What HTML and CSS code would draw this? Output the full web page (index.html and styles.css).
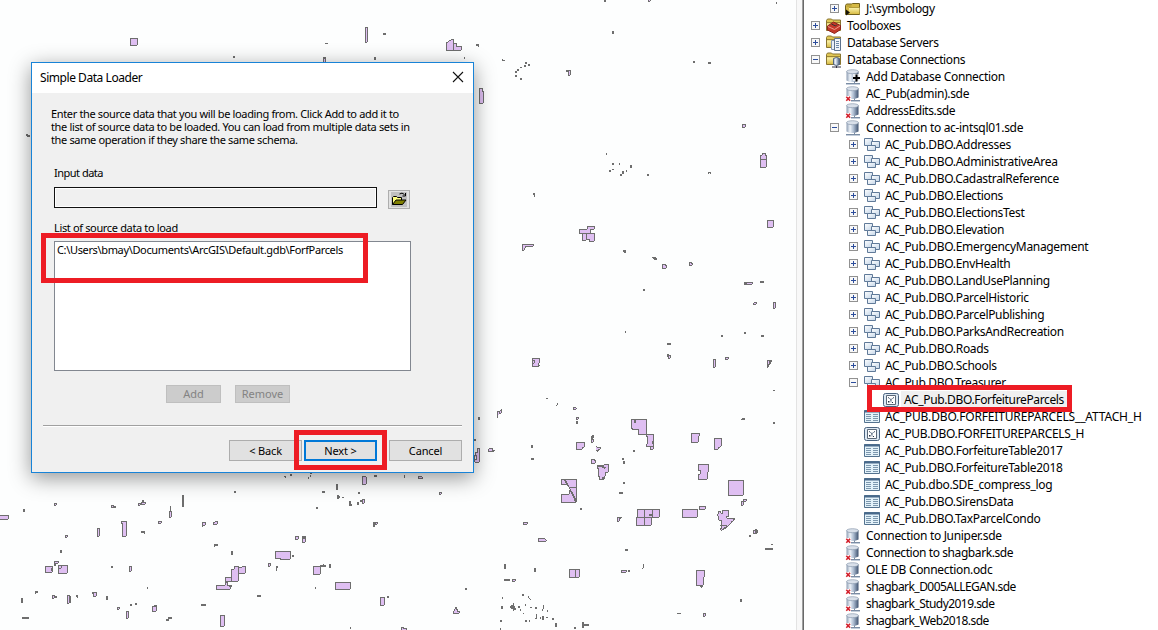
FILE: index.html
```html
<!DOCTYPE html>
<html lang="en">
<head>
<meta charset="utf-8">
<title>Simple Data Loader</title>
<link rel="stylesheet" href="styles.css">
</head>
<body>
<svg class="defs" aria-hidden="true">
  <defs>
    <linearGradient id="steel" x1="0" x2="1" y1="0" y2="0"><stop offset="0" stop-color="#8d9db3"/><stop offset=".3" stop-color="#eef3f9"/><stop offset=".6" stop-color="#a9b9ce"/><stop offset="1" stop-color="#3f526f"/></linearGradient>
    <linearGradient id="gold" x1="0" x2="0" y1="0" y2="1"><stop offset="0" stop-color="#fbf4b0"/><stop offset="1" stop-color="#d9bd45"/></linearGradient>
    <linearGradient id="sky" x1="0" x2="1" y1="0" y2="1"><stop offset="0" stop-color="#fff"/><stop offset="1" stop-color="#c3d5e8"/></linearGradient>
    <symbol id="plus" viewBox="0 0 9 9"><rect x=".5" y=".5" width="8" height="8" fill="#f8f8f8" stroke="#919191"/><path d="M2 4.500h5M4.500 2v5" stroke="#2c4d9c"/></symbol>
    <symbol id="minus" viewBox="0 0 9 9"><rect x=".5" y=".5" width="8" height="8" fill="#f8f8f8" stroke="#919191"/><path d="M2 4.500h5" stroke="#2c4d9c"/></symbol>
    <symbol id="folder" viewBox="0 0 16 16"><path d="M.5 13.500V4.500l1-1.500h5l1-.5h7v11z" fill="#d5b945" stroke="#71601d"/><path d="M4 13V6.500h10.500V13z" fill="url(#gold)"/><path d="M4 6.500h10.500M1.500 5h5" stroke="#a58d2c" stroke-width=".8"/><path d="M1 8.500l4 3-4 3z" fill="#17150b"/></symbol>
    <symbol id="cfolder" viewBox="0 0 16 16"><path d="M.5 12.500V2.500l1-1.500h4l1 1h8v10.500z" fill="#dfc654" stroke="#897530"/><path d="M1 5.500h13v6.500H1z" fill="url(#gold)"/><path d="M1 4.500h13" stroke="#9c8533"/></symbol>
    <symbol id="toolbox" viewBox="0 0 16 16"><use href="#cfolder" width="16" height="16"/><path d="M1.500 8l6-4 7 3.500v4l-6 4-7-3.500z" fill="#c4392a" stroke="#8e261c"/><path d="M2 8.500l6.500 3 5.500-3.500" stroke="#ef9d8b" fill="none"/><path d="M5.500 6l4 2 1.500-1.500" stroke="#333" fill="none"/></symbol>
    <symbol id="servers" viewBox="0 0 16 16"><use href="#cfolder" width="16" height="16"/><path d="M5.500 5.500h3v9h-3z" fill="#e8eef5" stroke="#8195ad"/><path d="M8.500 3.500h6v12h-6z" fill="#f0f5fa" stroke="#5d738e"/><path d="M10 6.500h3M10 8.500h3M10 10.500h3M10 12.500h3" stroke="#6b88a8"/></symbol>
    <symbol id="conns" viewBox="0 0 16 16"><use href="#cfolder" width="16" height="16"/><path d="M7.500 6.500q3-2 6 0v6q-3 2-6 0z" fill="url(#steel)" stroke="#53657e"/><path d="M10.500 14v2M6 15h9" stroke="#334"/></symbol>
    <symbol id="db" viewBox="0 0 16 16"><path d="M1.500 2.500v9q5.500 3 12 0v-9z" fill="url(#steel)"/><ellipse cx="7.500" cy="2.700" rx="6" ry="2" fill="#d9e0ea" stroke="#8999ad" stroke-width=".7"/><path d="M9.500 12.500v2M1 14.500h14" stroke="#7b8da4"/><path d="M1 15.500h14" stroke="#c4cedb"/></symbol>
    <symbol id="dbx" viewBox="0 0 16 16"><use href="#db" width="16" height="16"/><path d="M0 10h6v6H0z" fill="#fff"/><path d="M1.300 10.800l3.800 4M5.100 10.800l-3.800 4" stroke="#d3202b" stroke-width="1.600"/></symbol>
    <symbol id="dbadd" viewBox="0 0 16 16"><use href="#db" width="16" height="16"/><path d="M8 5h7v7H8z" fill="#fff" opacity=".75"/><path d="M8 9h7M11.500 5.500v7" stroke="#000" stroke-width="2"/></symbol>
    <symbol id="dataset" viewBox="0 0 16 16"><g fill="url(#sky)" stroke="#607a99"><path d="M.5 1.500h8v7h-8z"/><path d="M7.500 4.500h8v6h-8z"/><path d="M3.500 8.500h8v5h-8z"/></g></symbol>
    <symbol id="fclass" viewBox="0 0 16 16"><rect x=".5" y="1.500" width="15" height="13" rx="2" fill="#dce8f3" stroke="#49627f"/><path d="M3.500 3.500h9v9h-9z" fill="#fff" stroke="#5b6878"/><path d="M5 5h1v1H5zM10 5h1v1h-1zM7 7h1.500v1.500H7zM9 10h1v1H9zM5 9h1.500v1.500H5z" fill="#25354a"/><path d="M5 5.500l3 2 3-2M8 7.500v3" stroke="#8997a7" fill="none"/></symbol>
    <symbol id="table" viewBox="0 0 16 16"><path d="M.5 1.500h15v12H.5z" fill="#e3f2fa" stroke="#53728f"/><path d="M0 2.500h16" stroke="#48698b" stroke-width="2"/><path d="M2 5.500h5M2 7.500h5M2 9.500h5M2 11.500h5M9 5.500h5M9 7.500h5M9 9.500h5M9 11.500h5" stroke="#7c97ae"/></symbol>
  </defs>
</svg>

<main class="screen">
  <section class="map">
    <svg class="parcels" width="796" height="630" viewBox="0 0 796 630">
      <!-- north west -->
      <g transform="scale(.333333)">
        <path class="lot" d="M390 114h21v21h-21zM1095 81h6v45h-6zM1338 150V126h6v-3h3v-3h6v-3h6v33zM1359 150V129h9v9h15v12zM969 171h6v20h-6z"/>
        <path class="speck" d="M1149 102h9M699 171h6M1125 171v9M1428 135h9M969 174h9M78 405h6M81 408h9"/>
        <path class="hair" d="M975 130.500h9M1393.500 171v6M1435.500 138v3"/>
      </g>
      <!-- north east -->
      <g transform="translate(470 0) scale(.333333)">
        <path class="lot" d="M534 -6h6v9h-6zM294 210h6v15h-6zM27 264h9v9h3v36H27zM816 372h9v9h-9zM870 465h6v-6h9v6h3v36H870zM870 477h18"/>
        <path class="speck" d="M402 3h6M429 93v9M165 189h6M174 195h6M162 198h6M141 210h6M135 216h6M135 228h6M150 237h6M288 213h6M669 186h6M714 189h9M426 492h6M483 495v9M417 513h6M459 513v9M450 525h6M531 525h6M189 582h6"/>
        <path class="hair" d="M919.500 6v6M97.500 177v6M99 181.500h6M150 202.500h6M409.500 459v6M448.500 489v6M426 508.500h6M469.500 510v6M714 517.500h9M715.500 517v5M721.500 517v5M193.500 585v6"/>
      </g>
      <!-- east -->
      <g transform="translate(470 210) scale(.333333)">
        <path class="lot" d="M891 30h18v21h-18zM327 57h24v-9h21v9h-12v12h-33zM336 69h12v21h-12zM348 69h24v24h-15v-6h-9zM156 102h33v6h-24v6h-3v6h-6zM576 162h9v3h3v9h-12zM657 156h6v3h3v6h-9zM822 216h24v6h-24zM849 279h3v-3h6v6h-9zM909 276h6v18h-6zM186 444h21v15h-3v6h3v3h-21zM186 450h6v9h-6zM591 432h3v3h6v9h-6v-6h-3zM729 447h6v24h-6zM765 441h9v6h-9zM891 450h9v12h-6v9h-3z"/>
        <path class="speck" d="M459 123h9M465 123v6M549 144h9M552 147h9M870 216h12M519 240h6M822 369h6M753 378h6M873 378h9M591 402h12M899 453v9M825 220h6M903 450v6"/>
        <path class="hair" d="M546 142.500h9M466.500 363v6M909 541.500h6M228 565.500h6"/>
      </g>
      <!-- south east -->
      <g transform="translate(470 400) scale(.333333)">
        <path class="lot" d="M81 54V33h6l6-6v12h-6v-6M309 21h9v6h-9zM318 51h6v6h-6zM12 180v-15h3v-9h6v-12h6v42H12zM12 177h6v-12M54 147l3-3h9v6h6v3h-18zM483 57h45v45h-24v-15h-18v-3h-3zM528 102h21v36h-21v-6h3v-24h-3zM540 138h9v9h-9zM318 126h24v15h-6v6h-18zM363 108v18h6v-9h-3v-9zM378 138l3 3h9v6h-6l-3 9v-6h-3M363 177h9v3h3v9h-12zM381 195h21v-3h12v24h-9v12h-3v9h-15v-9h-3v-24h-3zM273 237h45v69l-21-45-6-9h-18zM297 261h21M273 282h24v-12h3l18 36h-45zM663 99h24v9h-3v18h-21zM732 114h21v24h-3v3h-6v6h-12zM684 192h30v24h-3v21h-27v-15h6v-12h-6zM774 240h45v45h-45zM636 327h45v24h-45zM687 318h18v9h-18zM819 297h9v6h-9v12h-6v-12h6zM501 327h21v24h-21zM522 327h24v24h-24zM546 327h21v24h-21zM498 351h24v24h-24zM522 351h21v24h-21zM441 351h12v3h-6v9h-6zM742 342l3-9h6v6h6v-9h18v18h-6v6h24v3h-3v3l-6 3v3l-6 6-6 6-9 6-12 6v-6h3v-24h-9zM750 375h21l-12 10M159 366h12v6h-12zM204 414h18l6 6v3h-24zM297 507h18v24h-18zM315 507h12v24h-12zM678 510h24v21h-3v24h-21zM126 537h9v6h-9zM453 510h15v6h-15zM849 390h12v9h-12zM699 639h6v9h-6z"/>
        <path class="speck" d="M27 51v9M321 63v9M369 105v9M12 120h6M186 135v9M183 177h9M489 153h6M459 174v6M462 183v9M459 249h6M447 279h12M330 327h6M816 57h9M909 69h6M495 60v9M549 123v9M384 198h12L405 205M285 240l9 18M303 273l16 33M538 345h9M840 404v6M857 387v15M465 450h9M885 447h24M105 492v15M195 504v12M102 541h18M156 585h6M126 615v12M120 621h12L135 630M96 618v9M144 621h6M165 663h6M90 663h6M195 624h6M220 648v12M246 657h6M258 669v12M339 666v18M342 675h15M312 684h6M810 601h6M813 597v9M690 558h9M473 513h6M396 234h9"/>
        <path class="hair" d="M259.500 15h3v-6M813 58.500h6M903 433.500h6M517 505h3v-13M621 640.500h12M99 597v-6M177 589v6l6 3M166.500 612v6M130.500 610v22M180 624h6M222 615v6l-5 12M234 630v6M151.500 627v6M159 642h4M178.500 660v6M195 657l6-3v-9M200 642v6M211.500 651v6M229.500 654h6M91.500 684v6M694 558v6"/>
      </g>
      <!-- south west -->
      <g transform="translate(0 470) scale(.333333)">
        <path class="lot" d="M-3 135h27v12H-3zM162 99h6v6h-6zM333 105h6v6h-6zM414 99h6v6h-6zM423 96h12v6h-12zM195 195h6v6h-6zM291 174h6v24h-6zM363 153h15v45h-12v-39h-3zM474 153h9v6h-9zM507 123h6v18h-6zM606 156h9v9h-9zM639 156h6v-3h6v9h-12zM135 288h21v18h-21zM162 273h12v6h-12zM174 285h27v24h-27zM174 285h9v9h-9zM387 288h6v15h-6zM156 375h6v9h-6zM201 375h6v24h-6zM279 366h9v12h-9zM351 411h6v6h-6zM378 423h6v21h-6zM456 408h6v-3h6v18h-12zM660 435h12v33h-12zM648 345h27v-9h6v9h9v12h-42zM675 321h18v12h-18zM702 288h12v45h-21v-36h9zM714 291h12v-3h9v21h-21z"/>
        <path class="speck" d="M69 121h6M72 117v9M702 66h6M549 75v36M339 111h9M426 93h6M423 187h12M183 240v9M333 291h6M156 294v9M165 279v9M105 366h9M66 384v15M66 444h21M167 378v6M209 378v21M228 378h6M276 369h6M321 378v12M390 405h6M405 402h6M462 408h9M603 405h15M504 444h12M498 450h9M642 225h12M696 243v12M687 348h9"/>
        <path class="hair" d="M511.500 108v15M433.500 189v3M643.500 225v6M607.500 165v6M442.500 351v6M106.500 369v3M232.500 381v3"/>
      </g>
      <!-- south -->
      <g transform="translate(240 470) scale(.333333)">
        <path class="lot" d="M366 18h12v24h-12zM534 18h12v6h-12zM597 66h6v6h-6zM366 87h6v12h-6zM405 156h6v6h-6zM165 198h9v9h-9zM186 204h9v12h-9zM105 243h45v24h-30v-3h-15zM84 279h6v9h-6zM219 288h21v24h-21zM285 336h45v21h-45zM420 381h12v24h-12zM639 429v-6h3v-6h3v-6h3v6h3v6h6v6zM483 471h6v3h9v9h-15z"/>
        <path class="speck" d="M150 15h6M402 18h9M291 42v18M246 66h9M354 69h6M228 114h6M330 93v12M327 105h9M294 75v9M360 93h6M354 96v9M402 156v15M186 201h12M156 258h6M240 288h18M270 282v12M51 378h12M441 381h6M676 357h5M111 288v6"/>
        <path class="hair" d="M132 19.500h6v3M210 10.500h6M211.500 15v6M205.500 21v6M493.500 15v9M291 85.500h6M298.500 78v6M306 82.500h6M109.500 290v12M226.500 351v6M331.500 471v6M249 283.500h3"/>
      </g>
    </svg>
  </section>

  <aside class="catalog">
    <ul class="tree">
      <li class="row l1"><svg class="exp"><use href="#plus"/></svg><svg class="ico"><use href="#folder"/></svg><span>J:\symbology</span></li>
      <li class="row"><svg class="exp"><use href="#plus"/></svg><svg class="ico"><use href="#toolbox"/></svg><span>Toolboxes</span></li>
      <li class="row"><svg class="exp"><use href="#plus"/></svg><svg class="ico"><use href="#servers"/></svg><span class="snug">Database Servers</span></li>
      <li class="row"><svg class="exp"><use href="#minus"/></svg><svg class="ico"><use href="#conns"/></svg><span class="snug">Database Connections</span></li>
      <li class="row l1"><i class="exp"></i><svg class="ico"><use href="#dbadd"/></svg><span>Add Database Connection</span></li>
      <li class="row l1"><i class="exp"></i><svg class="ico"><use href="#dbx"/></svg><span>AC_Pub(admin).sde</span></li>
      <li class="row l1"><i class="exp"></i><svg class="ico"><use href="#dbx"/></svg><span class="snug">AddressEdits.sde</span></li>
      <li class="row l1"><svg class="exp"><use href="#minus"/></svg><svg class="ico"><use href="#db"/></svg><span>Connection to ac-intsql01.sde</span></li>
      <li class="row l2"><svg class="exp"><use href="#plus"/></svg><svg class="ico"><use href="#dataset"/></svg><span>AC_Pub.DBO.Addresses</span></li>
      <li class="row l2"><svg class="exp"><use href="#plus"/></svg><svg class="ico"><use href="#dataset"/></svg><span>AC_Pub.DBO.AdministrativeArea</span></li>
      <li class="row l2"><svg class="exp"><use href="#plus"/></svg><svg class="ico"><use href="#dataset"/></svg><span>AC_Pub.DBO.CadastralReference</span></li>
      <li class="row l2"><svg class="exp"><use href="#plus"/></svg><svg class="ico"><use href="#dataset"/></svg><span>AC_Pub.DBO.Elections</span></li>
      <li class="row l2"><svg class="exp"><use href="#plus"/></svg><svg class="ico"><use href="#dataset"/></svg><span>AC_Pub.DBO.ElectionsTest</span></li>
      <li class="row l2"><svg class="exp"><use href="#plus"/></svg><svg class="ico"><use href="#dataset"/></svg><span>AC_Pub.DBO.Elevation</span></li>
      <li class="row l2"><svg class="exp"><use href="#plus"/></svg><svg class="ico"><use href="#dataset"/></svg><span>AC_Pub.DBO.EmergencyManagement</span></li>
      <li class="row l2"><svg class="exp"><use href="#plus"/></svg><svg class="ico"><use href="#dataset"/></svg><span>AC_Pub.DBO.EnvHealth</span></li>
      <li class="row l2"><svg class="exp"><use href="#plus"/></svg><svg class="ico"><use href="#dataset"/></svg><span>AC_Pub.DBO.LandUsePlanning</span></li>
      <li class="row l2"><svg class="exp"><use href="#plus"/></svg><svg class="ico"><use href="#dataset"/></svg><span>AC_Pub.DBO.ParcelHistoric</span></li>
      <li class="row l2"><svg class="exp"><use href="#plus"/></svg><svg class="ico"><use href="#dataset"/></svg><span>AC_Pub.DBO.ParcelPublishing</span></li>
      <li class="row l2"><svg class="exp"><use href="#plus"/></svg><svg class="ico"><use href="#dataset"/></svg><span>AC_Pub.DBO.ParksAndRecreation</span></li>
      <li class="row l2"><svg class="exp"><use href="#plus"/></svg><svg class="ico"><use href="#dataset"/></svg><span>AC_Pub.DBO.Roads</span></li>
      <li class="row l2"><svg class="exp"><use href="#plus"/></svg><svg class="ico"><use href="#dataset"/></svg><span>AC_Pub.DBO.Schools</span></li>
      <li class="row l2"><svg class="exp"><use href="#minus"/></svg><svg class="ico"><use href="#dataset"/></svg><span>AC_Pub.DBO.Treasurer</span></li>
      <li class="row l3 selected"><i class="exp"></i><svg class="ico"><use href="#fclass"/></svg><span>AC_Pub.DBO.ForfeitureParcels</span></li>
      <li class="row l2"><i class="exp"></i><svg class="ico"><use href="#table"/></svg><span class="caps">AC_PUB.DBO.FORFEITUREPARCELS__ATTACH_H</span></li>
      <li class="row l2"><i class="exp"></i><svg class="ico"><use href="#fclass"/></svg><span>AC_PUB.DBO.FORFEITUREPARCELS_H</span></li>
      <li class="row l2"><i class="exp"></i><svg class="ico"><use href="#table"/></svg><span>AC_Pub.DBO.ForfeitureTable2017</span></li>
      <li class="row l2"><i class="exp"></i><svg class="ico"><use href="#table"/></svg><span>AC_Pub.DBO.ForfeitureTable2018</span></li>
      <li class="row l2"><i class="exp"></i><svg class="ico"><use href="#table"/></svg><span>AC_Pub.dbo.SDE_compress_log</span></li>
      <li class="row l2"><i class="exp"></i><svg class="ico"><use href="#table"/></svg><span>AC_Pub.DBO.SirensData</span></li>
      <li class="row l2"><i class="exp"></i><svg class="ico"><use href="#table"/></svg><span>AC_Pub.DBO.TaxParcelCondo</span></li>
      <li class="row l1"><i class="exp"></i><svg class="ico"><use href="#dbx"/></svg><span>Connection to Juniper.sde</span></li>
      <li class="row l1"><i class="exp"></i><svg class="ico"><use href="#dbx"/></svg><span class="snug">Connection to shagbark.sde</span></li>
      <li class="row l1"><i class="exp"></i><svg class="ico"><use href="#dbx"/></svg><span>OLE DB Connection.odc</span></li>
      <li class="row l1"><i class="exp"></i><svg class="ico"><use href="#dbx"/></svg><span class="tight">shagbark_D005ALLEGAN.sde</span></li>
      <li class="row l1"><i class="exp"></i><svg class="ico"><use href="#dbx"/></svg><span class="tight">shagbark_Study2019.sde</span></li>
      <li class="row l1"><i class="exp"></i><svg class="ico"><use href="#dbx"/></svg><span class="tight">shagbark_Web2018.sde</span></li>
    </ul>
  </aside>

  <section class="dialog">
    <header class="titlebar"><span>Simple Data Loader</span><svg width="12" height="12" viewBox="0 0 12 12"><path d="M1 1l10 10M11 1L1 11" stroke="#111" stroke-width="1.100"/></svg></header>
    <div class="body">
      <p class="intro">Enter the source data that you will be loading from. Click Add to add it to<br>the list of source data to be loaded. You can load from multiple data sets in<br>the same operation if they share the same schema.</p>
      <label class="input-label">Input data</label>
      <div class="input-row">
        <div class="input"></div>
        <div class="browse"><svg width="16" height="15" viewBox="0 0 16 15"><path d="M0 0h16v15H0z" fill="#c0c0c0"/><path d="M1.500 12.500v-7l1-1h3l1 1h4v3" fill="#ffff80" stroke="#000"/><path d="M1.500 12.500l3.500-4.500h10l-3.500 4.500z" fill="#808000" stroke="#000"/><path d="M8.500 2q2.500-2 5 .5M14.500 1v3h-3" fill="none" stroke="#000"/></svg></div>
      </div>
      <div class="list-label">List of source data to load</div>
      <div class="list">C:\Users\bmay\Documents\ArcGIS\Default.gdb\ForfParcels</div>
      <div class="edit"><div class="btn off">Add</div><div class="btn off">Remove</div></div>
      <div class="wizard"><div class="btn">&lt; Back</div><div class="btn primary">Next &gt;</div><div class="btn cancel">Cancel</div></div>
    </div>
  </section>
  <div class="mark mark-source"></div>
  <div class="mark mark-next"></div>
  <div class="mark mark-tree"></div>
</main>
</body>
</html>
```
FILE: styles.css
```css
* { box-sizing: border-box; }
body { margin: 0; background: #fff; color: #000; font-family: "Noto Sans", "Open Sans", sans-serif; }
.defs { position: absolute; width: 0; height: 0; }
.screen { position: relative; display: flex; width: 1158px; height: 630px; overflow: hidden; }

.map { width: 802px; background: #fdfefe; display: flex; border-right: 5px solid #f8f8f8; box-shadow: inset -1px 0 #e3e3e3; }
.parcels { display: block; shape-rendering: crispEdges; }
.lot { fill: #dfbff2; stroke: #6e6e6e; stroke-width: 3; transform: translate(1.5px, 1.5px); }
.speck, .hair { fill: none; stroke: #6e6e6e; }
.speck { stroke-width: 6; }
.hair { stroke-width: 3; }

.catalog { flex: 1; border-left: 1px solid #a0a0a0; box-shadow: inset 1px 0 #696969; padding-left: 8px; background: #fff; }
.tree { margin: 0; padding: 0; list-style: none; }
.row { display: flex; align-items: center; height: 17px; font-size: 12px; line-height: 17px; letter-spacing: -.32px; white-space: nowrap; }
.l1 { padding-left: 19px; }
.l2 { padding-left: 38px; }
.l3 { padding-left: 57px; }
.exp { width: 9px; height: 9px; margin-right: 6px; flex: none; }
.ico { width: 16px; height: 16px; margin-right: 5px; flex: none; }
.snug { letter-spacing: -.42px; }
.tight { letter-spacing: -.55px; }
.caps { letter-spacing: -.16px; }
.selected span { letter-spacing: -.36px; background: #f0f0f0; box-shadow: -3px 0 #f0f0f0, 3px 0 #f0f0f0; }

.dialog { position: absolute; left: 31px; top: 62px; width: 443px; height: 411px; display: flex; flex-direction: column; border: 1px solid #1883d7; background: #f0f0f0; box-shadow: 0 5px 20px rgba(0, 0, 0, .42); font-size: 11px; letter-spacing: -.35px; white-space: nowrap; }
.titlebar { height: 30px; padding: 0 9px 2px 8px; display: flex; align-items: center; justify-content: space-between; background: #fff; font-size: 12px; letter-spacing: -.45px; }
.body { flex: 1; padding: 14px 11px 0; }
.intro { margin: 0 0 0 8px; line-height: 13px; }
.input-label { display: block; margin: 20px 0 0 11px; line-height: 14px; letter-spacing: -.6px; letter-spacing: -.5px; }
.input-row { display: flex; margin: 7px 0 0 11px; }
.input { width: 323px; height: 21px; border: 1px solid #111; box-shadow: inset 0 0 0 1px #fff; }
.browse { display: flex; justify-content: center; align-items: center; width: 22px; height: 19px; margin: 3px 0 0 11px; border: 1px solid #adadad; background: #e1e1e1; }
.list-label { margin: 12px 0 0 11px; line-height: 14px; }
.list { width: 357px; height: 130px; margin: 6px 0 0 11px; padding: 1px 2px; border: 1px solid #828790; background: #fff; line-height: 14px; }
.edit { display: flex; gap: 14px; margin: 14px 0 0 123px; }
.btn { width: 73px; height: 21px; border: 1px solid #adadad; background: #e1e1e1; text-align: center; line-height: 19px; letter-spacing: -.15px; }
.btn.off { width: 55px; height: 18px; border-color: #bfbfbf; background: #ccc; color: #838383; line-height: 16px; letter-spacing: 0; }
.wizard { display: flex; margin-top: 22px; padding: 14px 0 0 186px; border-top: 1px solid #a0a0a0; box-shadow: inset 0 1px #fff; }
.btn.primary { margin-left: 2px; border: 2px solid #0078d7; line-height: 17px; }
.btn.cancel { margin-left: 12px; }

.mark { position: absolute; border: 5px solid #ed1c24; }
.mark-source { left: 41px; top: 233px; width: 327px; height: 50px; }
.mark-next { left: 294px; top: 430px; width: 93px; height: 40px; }
.mark-tree { left: 867px; top: 385px; width: 205px; height: 27px; }
```
